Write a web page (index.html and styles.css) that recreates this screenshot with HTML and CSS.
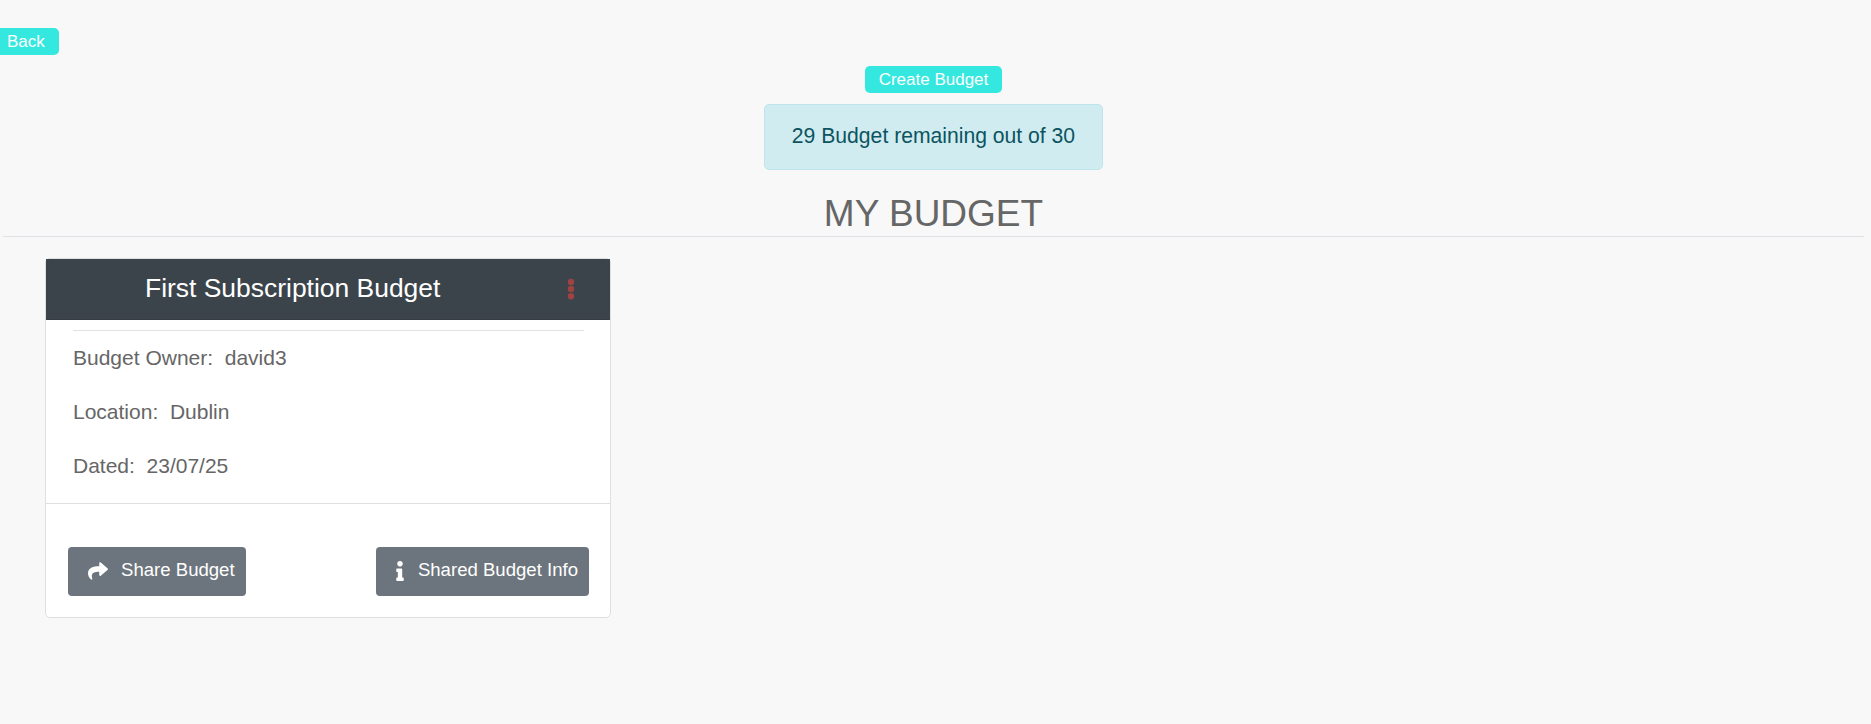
FILE: index.html
```
<!DOCTYPE html>
<html lang="en">
<head>
<meta charset="utf-8">
<title>My Budget</title>
<link rel="stylesheet" href="styles.css">
</head>
<body>
<a class="btn btn-back">Back</a>
<main class="page">
  <a class="btn btn-create">Create Budget</a>
  <div class="alert">29 Budget remaining out of 30</div>
  <h1 class="heading">MY BUDGET</h1>
  <article class="card">
    <header class="card-header">
      <h2 class="card-title">First Subscription Budget</h2>
      <svg class="menu" viewBox="0 0 8 22"><circle cx="4" cy="4" r="3.2"/><circle cx="4" cy="11" r="3.2"/><circle cx="4" cy="18.2" r="3.2"/></svg>
    </header>
    <div class="card-body">
      <p class="row">Budget Owner:&nbsp; david3</p>
      <p class="row">Location:&nbsp; Dublin</p>
      <p class="row">Dated:&nbsp; 23/07/25</p>
    </div>
    <footer class="card-footer">
      <a class="action"><svg class="icon-share" viewBox="0 0 512 512"><path d="M503.691 189.836L327.687 37.851C312.281 24.546 288 35.347 288 56.015v80.053C127.371 137.907 0 170.1 0 322.326c0 61.441 39.581 122.309 83.333 154.132 13.653 9.931 33.111-2.533 28.077-18.631C66.066 312.814 132.917 274.316 288 272.085V360c0 20.7 24.3 31.453 39.687 18.164l176.004-152c11.071-9.562 11.086-26.753 0-36.328z"/></svg>Share Budget</a>
      <a class="action"><svg class="icon-info" viewBox="0 0 192 512"><path d="M20 424.229h20V279.771H20c-11.046 0-20-8.954-20-20V212c0-11.046 8.954-20 20-20h112c11.046 0 20 8.954 20 20v212.229h20c11.046 0 20 8.954 20 20V492c0 11.046-8.954 20-20 20H20c-11.046 0-20-8.954-20-20v-47.771c0-11.046 8.954-20 20-20zM96 0C56.235 0 24 32.235 24 72s32.235 72 72 72 72-32.235 72-72S135.764 0 96 0z"/></svg>Shared Budget Info</a>
    </footer>
  </article>
</main>
</body>
</html>
```
FILE: styles.css
```
* { box-sizing: border-box; }
body {
  margin: 0;
  padding-top: 28px;
  background: #f8f8f8;
  color: #666;
  font: 21px/32px "Liberation Sans", Arial, sans-serif;
}
.btn {
  display: block;
  width: fit-content;
  height: 27px;
  background: #34e8e0;
  color: #fff;
  font-size: 17px;
  line-height: 27px;
  border-radius: 5px;
}
.btn-back {
  padding: 0 14px 0 7px;
  border-radius: 0 5px 5px 0;
}
.page {
  display: flex;
  flex-direction: column;
  align-items: center;
  margin: 11px 7px 0 3px;
}
.btn-create { padding: 0 14px; }
.alert {
  width: 339px;
  height: 66px;
  margin-top: 11px;
  border: 1px solid #bee5eb;
  border-radius: 5px;
  background: #d1ecf1;
  color: #0c5460;
  font-size: 21.15px;
  line-height: 62px;
  text-align: center;
}
.heading {
  align-self: stretch;
  height: 45px;
  margin: 22px 0 21px;
  border-bottom: 1px solid #dee2e6;
  font-size: 37px;
  font-weight: 400;
  line-height: 44px;
  text-align: center;
}
.card {
  align-self: flex-start;
  width: 566px;
  height: 360px;
  margin-left: 42px;
  border: 1px solid #dfdfdf;
  border-radius: 5px;
  background: #fff;
}
.card-header {
  display: flex;
  align-items: flex-start;
  justify-content: space-between;
  height: 61px;
  padding: 13px 35px 0 99px;
  border-bottom: 1px solid #373b42;
  background: #3c444b;
  color: #fff;
}
.card-title {
  margin: 0;
  font-size: 26.45px;
  font-weight: 400;
  line-height: 32px;
}
.menu {
  width: 8px;
  height: 22px;
  margin-top: 6px;
  fill: #9f4242;
}
.card-body {
  height: 174px;
  margin: 10px 26px 0 27px;
  padding-top: 11px;
  border-top: 1px solid #e2e2e2;
}
.row { margin: 0 0 22px; }
.card-footer {
  display: flex;
  justify-content: space-between;
  margin-top: -1px;
  padding: 43px 21px 0 22px;
  border-top: 1px solid #dfdfdf;
}
.action {
  display: flex;
  height: 49px;
  padding: 0 11px 0 20px;
  border-radius: 4px;
  background: #6c757d;
  color: #fff;
  font-size: 18.59px;
  line-height: 45px;
}
.action svg { fill: #fff; height: 20px; margin-top: 14px; }
.icon-share { width: 20px; margin-right: 13px; }
.icon-info { width: 8px; margin-right: 14px; }
```
